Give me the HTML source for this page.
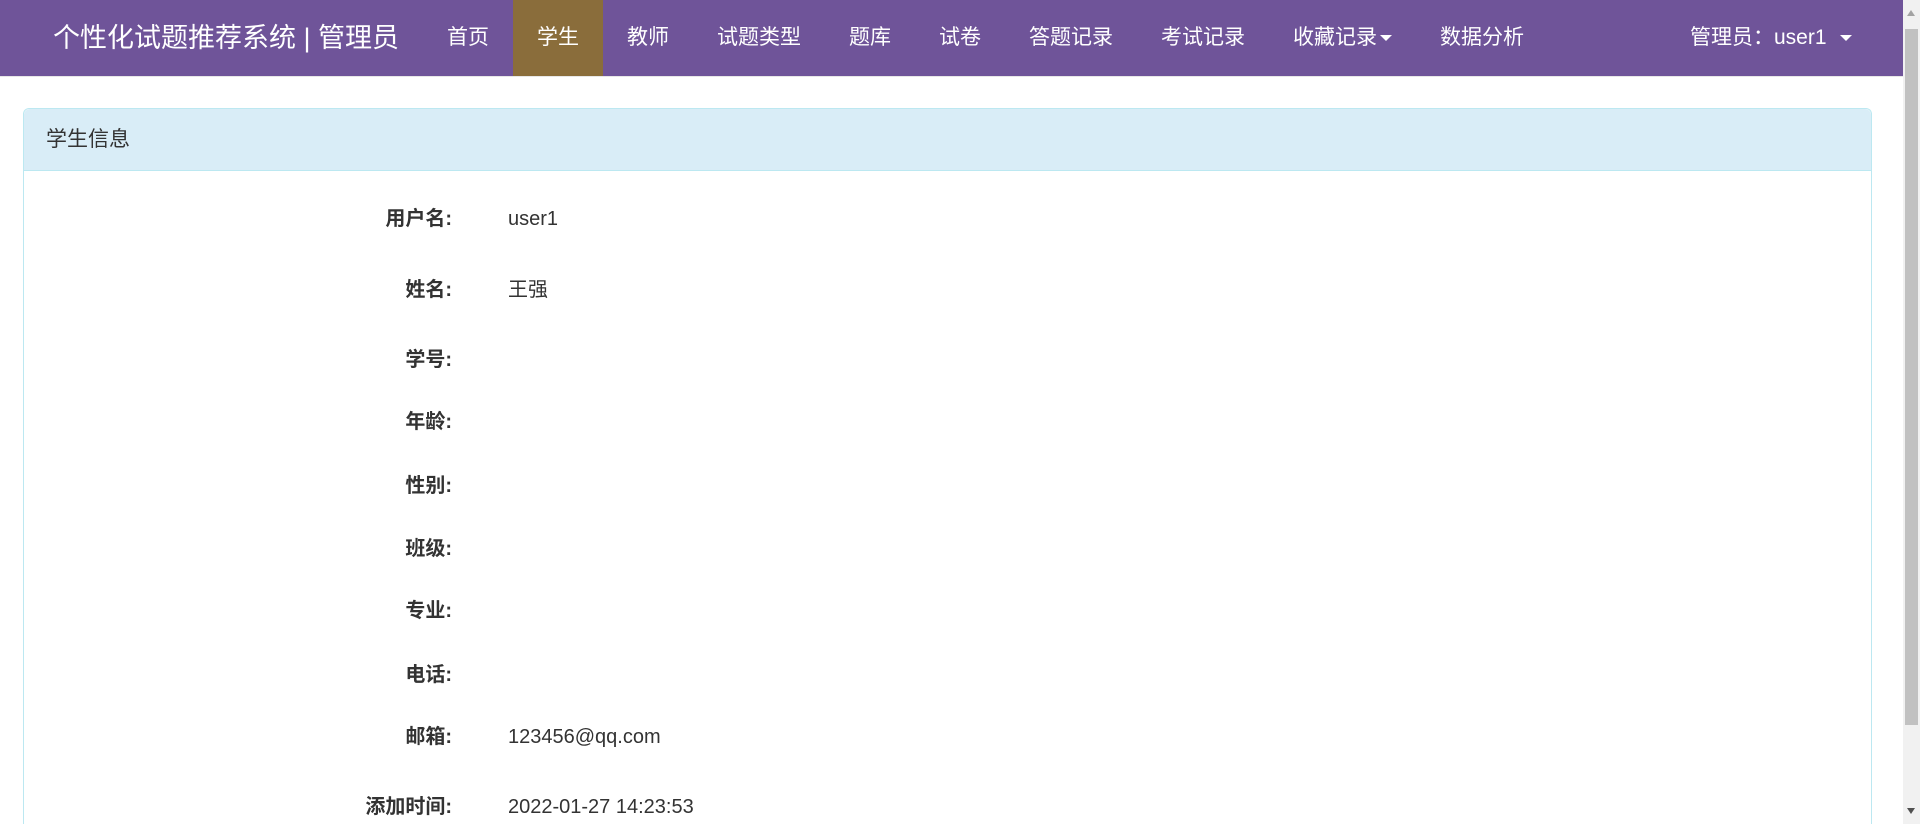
<!DOCTYPE html>
<html><head><meta charset="utf-8"><style>
html,body{margin:0;padding:0;width:1920px;height:824px;overflow:hidden;background:#fff;font-family:"Liberation Sans","Noto Sans CJK SC",sans-serif;color:#333}
#wrap{position:relative;width:1920px;height:824px;overflow:hidden}
.nav{position:absolute;left:0;top:0;width:1903px;height:76px;background:#6f5499;border-bottom:1px solid #e7e7e7}
.brand{position:absolute;left:53px;top:0;line-height:76px;font-size:27px;color:#fff}
.links{position:absolute;left:423px;top:0;display:flex;height:76px}
.links a{display:block;padding:0 24px;line-height:76px;font-size:21px;color:#fff;text-decoration:none}
.links a.act{background:#8a6d3b}
.caret{display:inline-block;width:0;height:0;border-top:6px solid #fff;border-left:6px solid transparent;border-right:6px solid transparent;vertical-align:middle;margin-left:3px}
.right{position:absolute;left:1690px;top:0;line-height:76px;font-size:21px;color:#fff}
.panel{position:absolute;left:23px;top:108px;width:1849px;height:730px;border:1px solid #bce8f1;border-bottom:none;border-radius:6px 6px 0 0;box-sizing:border-box}
.ph{height:61px;background:#d9edf7;border-bottom:1px solid #bce8f1;border-radius:6px 6px 0 0;line-height:61px;padding-left:22px;font-size:21px;color:#333}
.row{position:absolute;left:0;width:1000px;height:30px;line-height:30px;font-size:20px}
.row b{position:absolute;width:300px;text-align:right;left:152px}
.row span{position:absolute;left:508px}
.sb{position:absolute;left:1903px;top:0;width:17px;height:824px;background:#f1f1f1}
.thumb{position:absolute;left:2px;top:29px;width:13px;height:696px;background:#c1c1c1}
</style></head><body><div id="wrap">
<div class="nav">
<div class="brand">个性化试题推荐系统 | 管理员</div>
<div class="links">
<a>首页</a><a class="act">学生</a><a>教师</a><a>试题类型</a><a>题库</a><a>试卷</a><a>答题记录</a><a>考试记录</a><a>收藏记录<span class="caret"></span></a><a>数据分析</a>
</div>
<div class="right">管理员：user1 <span class="caret" style="margin-left:8px"></span></div>
</div>
<div class="panel" style="height:716px"><div class="ph">学生信息</div></div>
<div class="row" style="top:204px"><b>用户名:</b><span>user1</span></div>
<div class="row" style="top:275px"><b>姓名:</b><span>王强</span></div>
<div class="row" style="top:345px"><b>学号:</b></div>
<div class="row" style="top:407px"><b>年龄:</b></div>
<div class="row" style="top:471px"><b>性别:</b></div>
<div class="row" style="top:534px"><b>班级:</b></div>
<div class="row" style="top:596px"><b>专业:</b></div>
<div class="row" style="top:660px"><b>电话:</b></div>
<div class="row" style="top:722px"><b>邮箱:</b><span>123456@qq.com</span></div>
<div class="row" style="top:792px"><b>添加时间:</b><span>2022-01-27 14:23:53</span></div>
<div class="sb"><div class="thumb"></div>
<div style="position:absolute;left:4px;top:10px;border-bottom:6px solid #a3a3a3;border-left:4.5px solid transparent;border-right:4.5px solid transparent"></div>
<div style="position:absolute;left:4px;top:808px;border-top:6px solid #505050;border-left:4.5px solid transparent;border-right:4.5px solid transparent"></div>
</div>
</div></body></html>
